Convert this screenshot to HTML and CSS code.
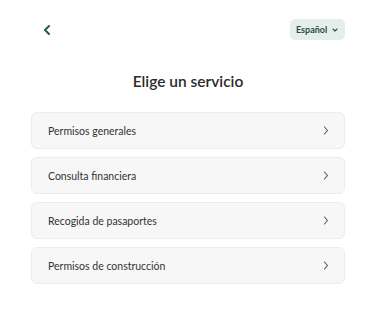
FILE: index.html
```html
<!DOCTYPE html>
<html lang="es">
<head>
  <meta charset="UTF-8">
  <meta name="viewport" content="width=device-width, initial-scale=1.0">
  <title>Elige un servicio</title>
  <link rel="stylesheet" href="styles.css">
</head>
<body>
  <div class="page">
    <header class="topbar">
      <button class="back-btn" aria-label="Volver">
        <svg width="8" height="10" viewBox="0 0 8 10"><path d="M6 1 L2 5 L6 9" fill="none" stroke="#1d5e5e" stroke-width="2" stroke-linecap="round" stroke-linejoin="round"/></svg>
      </button>
      <button class="lang-btn">
        Español
        <svg width="6" height="4" viewBox="0 0 6 4"><path d="M1 1 L3 3 L5 1" fill="none" stroke="#2d4a47" stroke-width="1.1" stroke-linecap="round" stroke-linejoin="round"/></svg>
      </button>
    </header>

    <h1>Elige un servicio</h1>

    <div class="services">
      <a class="service-item" href="#">
        <span>Permisos generales</span>
        <svg class="chev" width="6" height="9" viewBox="0 0 6 9"><path d="M1.5 1 L4.5 4.5 L1.5 8" fill="none" stroke="#555" stroke-width="1.1" stroke-linecap="round" stroke-linejoin="round"/></svg>
      </a>
      <a class="service-item" href="#">
        <span>Consulta financiera</span>
        <svg class="chev" width="6" height="9" viewBox="0 0 6 9"><path d="M1.5 1 L4.5 4.5 L1.5 8" fill="none" stroke="#555" stroke-width="1.1" stroke-linecap="round" stroke-linejoin="round"/></svg>
      </a>
      <a class="service-item" href="#">
        <span>Recogida de pasaportes</span>
        <svg class="chev" width="6" height="9" viewBox="0 0 6 9"><path d="M1.5 1 L4.5 4.5 L1.5 8" fill="none" stroke="#555" stroke-width="1.1" stroke-linecap="round" stroke-linejoin="round"/></svg>
      </a>
      <a class="service-item" href="#">
        <span>Permisos de construcción</span>
        <svg class="chev" width="6" height="9" viewBox="0 0 6 9"><path d="M1.5 1 L4.5 4.5 L1.5 8" fill="none" stroke="#555" stroke-width="1.1" stroke-linecap="round" stroke-linejoin="round"/></svg>
      </a>
    </div>
  </div>
</body>
</html>
```

FILE: styles.css
```css
* {
  box-sizing: border-box;
  margin: 0;
  padding: 0;
}

body {
  font-family: 'Lato', sans-serif;
  background-color: #fff;
  color: #333;
}

.page {
  padding: 19px 28px 0 31px;
}

.topbar {
  display: flex;
  justify-content: space-between;
  align-items: center;
  height: 21px;
}

.back-btn {
  width: 32px;
  height: 21px;
  border: none;
  background: none;
  display: flex;
  align-items: center;
  justify-content: center;
  cursor: pointer;
}

.lang-btn {
  height: 21px;
  width: 55px;
  border: none;
  border-radius: 5px;
  background-color: #e4eeeb;
  color: #2d4a47;
  font-family: 'Lato', sans-serif;
  font-size: 9px;
  font-weight: 700;
  display: flex;
  align-items: center;
  gap: 5px;
  padding-left: 6px;
  cursor: pointer;
}

h1 {
  text-align: center;
  font-size: 15.5px;
  font-weight: 600;
  color: #2b2b2b;
  margin-top: 31px;
  margin-bottom: 21px;
  line-height: 20px;
}

.services {
  display: flex;
  flex-direction: column;
  gap: 8px;
}

.service-item {
  display: flex;
  justify-content: space-between;
  align-items: center;
  height: 37px;
  padding: 0 15px 0 16px;
  background-color: #f7f7f7;
  border: 1px solid #ececec;
  border-radius: 6px;
  color: #333;
  font-size: 10.5px;
  text-decoration: none;
}
```
